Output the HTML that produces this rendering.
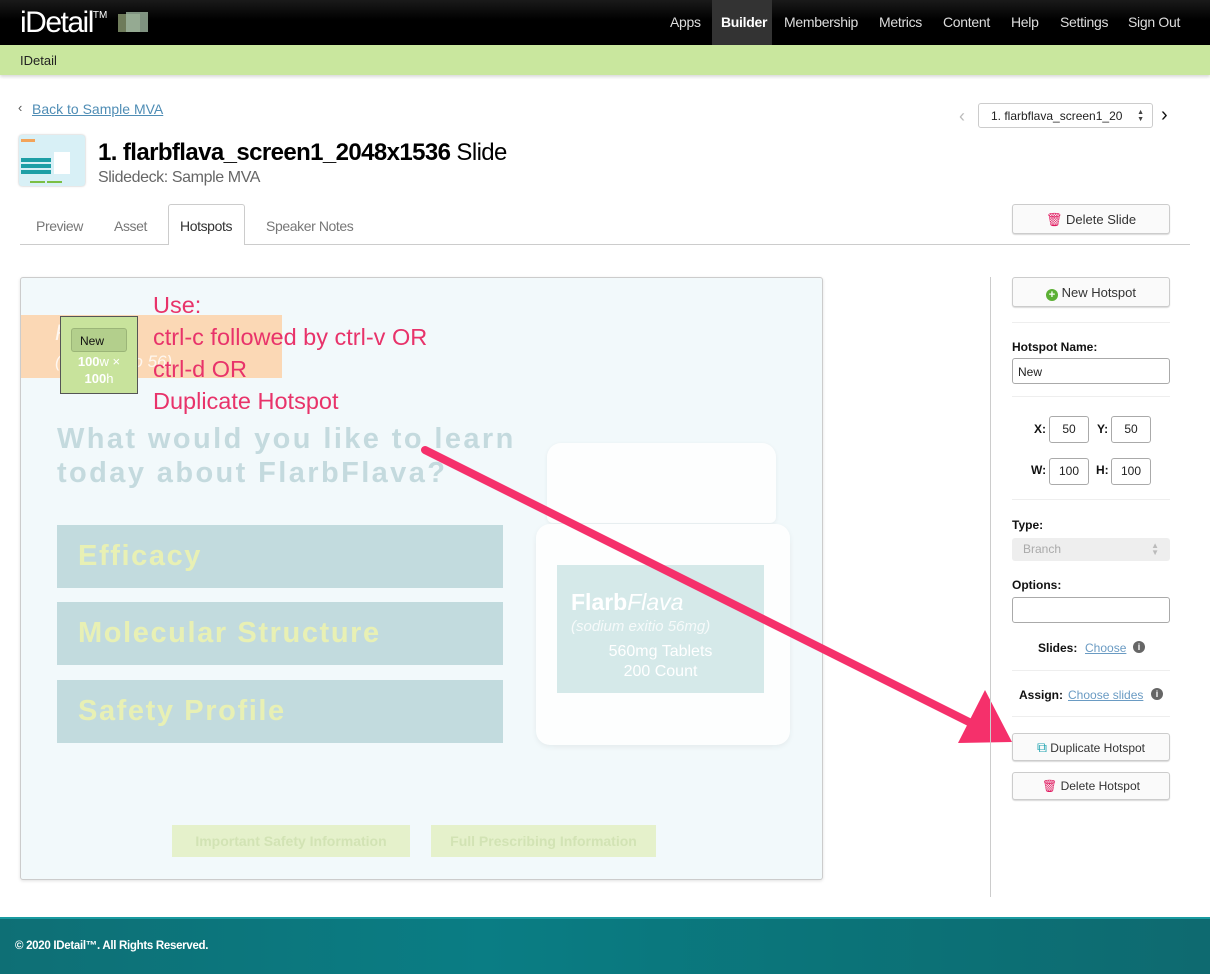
<!DOCTYPE html>
<html><head><meta charset="utf-8"><style>
*{box-sizing:border-box;margin:0;padding:0}
body{width:1210px;height:974px;position:relative;background:#fff;font-family:"Liberation Sans",sans-serif;overflow:hidden;color:#222}
.a{position:absolute}
.top{left:0;top:0;width:1210px;height:45px;background:linear-gradient(#1a1a1a,#000 45%)}
.nav{font-size:14px;color:#ddd;top:14px;letter-spacing:-0.3px}
.green{left:0;top:45px;width:1210px;height:30px;background:#c9e79e;box-shadow:0 2px 3px rgba(0,0,0,.15)}
.btn{background:#fafafa;border:1px solid #ccc;border-radius:3px;box-shadow:0 1px 1px rgba(0,0,0,.15);font-size:12px;color:#333;text-align:center}
.inp{border:1px solid #aaa;border-radius:3px;background:#fff;font-size:12px}
.lbl{font-size:12px;font-weight:bold;color:#111}
.hr{height:1px;background:#eee;left:1012px;width:158px}
.sb{background:#c2dbde;left:57px;width:446px;height:63px;color:#e8f0b4;font-weight:bold;font-size:29px;padding-left:21px;line-height:63px;letter-spacing:1.6px}
.pink{color:#e8336a;font-size:23.5px;left:153px}
</style></head><body>
<div class="a top"></div>
<div class="a" style="left:20px;top:6px;font-size:30px;color:#fff;letter-spacing:-1.5px">iDetail<sup style="font-size:10px;letter-spacing:0;vertical-align:top;position:relative;top:4px">TM</sup></div>
<div class="a" style="left:118px;top:14px;width:22px;height:18px;background:#8a9a70;opacity:.8"></div>
<div class="a" style="left:126px;top:12px;width:22px;height:20px;background:#9fb7a0;opacity:.8"></div>
<div class="a" style="left:712px;top:0;width:60px;height:45px;background:#333"></div>
<div class="a nav" style="left:670px">Apps</div>
<div class="a nav" style="left:721px;color:#fff;font-weight:bold">Builder</div>
<div class="a nav" style="left:784px">Membership</div>
<div class="a nav" style="left:879px">Metrics</div>
<div class="a nav" style="left:943px">Content</div>
<div class="a nav" style="left:1011px">Help</div>
<div class="a nav" style="left:1060px">Settings</div>
<div class="a nav" style="left:1128px">Sign Out</div>
<div class="a green"></div>
<div class="a" style="left:20px;top:53px;font-size:13px;color:#222">IDetail</div>
<div class="a" style="left:18px;top:100px;font-size:13px;color:#555">‹</div>
<div class="a" style="left:32px;top:101px;font-size:14px;color:#4f8db5;text-decoration:underline">Back to Sample MVA</div>
<div class="a" style="left:959px;top:106px;font-size:18px;color:#bbb">‹</div>
<div class="a inp" style="left:978px;top:103px;width:175px;height:25px;border-color:#ccc;padding:5px 12px;font-size:12px;color:#222">1. flarbflava_screen1_20 <span style="position:absolute;right:8px;top:5px;font-size:7px;line-height:7px;color:#444">▲<br>▼</span></div>
<div class="a" style="left:1161px;top:104px;font-size:20px;color:#111">›</div>
<div class="a" style="left:19px;top:135px;width:66px;height:51px;background:#d8f0f6;border-radius:3px;box-shadow:0 0 2px #bbb"></div>
<div class="a" style="left:21px;top:139px;width:14px;height:3px;background:#f3a45a"></div>
<div class="a" style="left:21px;top:158px;width:30px;height:4px;background:#1e9fa6"></div>
<div class="a" style="left:21px;top:164px;width:30px;height:4px;background:#1e9fa6"></div>
<div class="a" style="left:21px;top:170px;width:30px;height:4px;background:#1e9fa6"></div>
<div class="a" style="left:54px;top:152px;width:16px;height:22px;background:#fff"></div>
<div class="a" style="left:30px;top:181px;width:15px;height:2px;background:#7bbf44"></div>
<div class="a" style="left:47px;top:181px;width:15px;height:2px;background:#7bbf44"></div>
<div class="a" style="left:98px;top:139px;font-size:24px;color:#000;letter-spacing:-0.6px"><b>1. flarbflava_screen1_2048x1536</b> Slide</div>
<div class="a" style="left:98px;top:169px;font-size:16px;color:#666;letter-spacing:-0.4px">Slidedeck: Sample MVA</div>
<div class="a" style="left:20px;top:244px;width:1170px;height:1px;background:#ccc"></div>
<div class="a" style="left:168px;top:204px;width:77px;height:41px;border:1px solid #ccc;border-bottom:none;background:#fff;border-radius:3px 3px 0 0"></div>
<div class="a" style="left:36px;top:218px;font-size:14px;color:#777;letter-spacing:-0.4px">Preview</div>
<div class="a" style="left:114px;top:218px;font-size:14px;color:#777;letter-spacing:-0.4px">Asset</div>
<div class="a" style="left:180px;top:218px;font-size:14px;color:#333;letter-spacing:-0.4px">Hotspots</div>
<div class="a" style="left:266px;top:218px;font-size:14px;color:#777;letter-spacing:-0.4px">Speaker Notes</div>
<div class="a btn" style="left:1012px;top:204px;width:158px;height:30px;line-height:29px;font-size:13px"><span style="color:#e0185e">🗑</span> Delete Slide</div>

<!-- slide -->
<div class="a" style="left:20px;top:277px;width:803px;height:603px;background:#f2f9fb;border:1px solid #ccc;border-radius:3px;box-shadow:0 1px 3px rgba(0,0,0,.12);overflow:hidden">
</div>
<div class="a" style="left:21px;top:315px;width:261px;height:63px;background:#fbd8b5"></div>
<div class="a" style="left:55px;top:320px;font-size:22px;color:#fff;font-style:italic;opacity:.8">F&nbsp;&nbsp;&nbsp;&nbsp;&nbsp;&nbsp;Fla</div>
<div class="a" style="left:55px;top:352px;font-size:17px;color:#fff;font-style:italic;opacity:.8">(&nbsp;&nbsp;&nbsp;&nbsp;&nbsp;&nbsp;&nbsp;&nbsp;&nbsp;exitio 56)</div>
<div class="a" style="left:60px;top:316px;width:78px;height:78px;background:#c8e39c;border:1px solid #555"></div>
<div class="a" style="left:71px;top:328px;width:56px;height:24px;background:#b3cf8c;border:1px solid #9bb578;border-radius:3px;font-size:12px;padding:5px 8px;color:#111">New</div>
<div class="a" style="left:61px;top:353px;width:76px;text-align:center;color:#fff;font-size:13px;line-height:17px"><b>100</b>w ×<br><b>100</b>h</div>
<div class="a pink" style="top:292px">Use:</div>
<div class="a pink" style="top:324px">ctrl-c followed by ctrl-v OR</div>
<div class="a pink" style="top:356px">ctrl-d OR</div>
<div class="a pink" style="top:388px">Duplicate Hotspot</div>
<div class="a" style="left:57px;top:422px;font-size:29px;font-weight:bold;color:#c4dade;line-height:34px;letter-spacing:2.4px">What would you like to learn<br>today about FlarbFlava?</div>
<div class="a sb" style="top:525px">Efficacy</div>
<div class="a sb" style="top:602px">Molecular Structure</div>
<div class="a sb" style="top:680px">Safety Profile</div>
<div class="a" style="left:547px;top:443px;width:229px;height:80px;background:#fdfefe;border-radius:14px 14px 6px 6px;box-shadow:0 1px 4px rgba(0,0,0,.06)"></div>
<div class="a" style="left:536px;top:524px;width:254px;height:221px;background:#fdfefe;border-radius:14px;box-shadow:0 2px 6px rgba(0,0,0,.06)"></div>
<div class="a" style="left:557px;top:565px;width:207px;height:128px;background:#d5e9e9"></div>
<div class="a" style="left:571px;top:589px;font-size:23px;color:#fff"><b>Flarb</b><i style="font-weight:normal">Flava</i></div>
<div class="a" style="left:571px;top:618px;font-size:15px;color:#fff;font-style:italic;opacity:.8">(sodium exitio 56mg)</div>
<div class="a" style="left:557px;top:642px;width:207px;text-align:center;font-size:16px;color:#fff;line-height:20px">560mg Tablets<br>200 Count</div>
<div class="a" style="left:172px;top:825px;width:238px;height:32px;background:#e5f1cb;color:#d2e3b4;font-weight:bold;font-size:14px;text-align:center;line-height:32px">Important Safety Information</div>
<div class="a" style="left:431px;top:825px;width:225px;height:32px;background:#e5f1cb;color:#d2e3b4;font-weight:bold;font-size:14px;text-align:center;line-height:32px">Full Prescribing Information</div>

<!-- arrow -->
<svg class="a" style="left:0;top:0" width="1210" height="974"><line x1="425" y1="450" x2="975" y2="725" stroke="#f5306b" stroke-width="8" stroke-linecap="round"/><polygon points="1012,742 958,743 985,690" fill="#f5306b"/></svg>

<!-- right panel -->
<div class="a" style="left:990px;top:277px;width:1px;height:620px;background:#ccc"></div>
<div class="a btn" style="left:1012px;top:277px;width:158px;height:30px;line-height:29px;font-size:13px"><span style="display:inline-block;width:12px;height:12px;border-radius:50%;background:#5cb035;color:#fff;font-size:11px;line-height:12px;font-weight:bold;vertical-align:-1px">+</span> New Hotspot</div>
<div class="a hr" style="top:322px"></div>
<div class="a lbl" style="left:1012px;top:340px">Hotspot Name:</div>
<div class="a inp" style="left:1012px;top:358px;width:158px;height:26px;padding:6px 5px">New</div>
<div class="a hr" style="top:396px"></div>
<div class="a lbl" style="left:1034px;top:422px">X:</div>
<div class="a inp" style="left:1049px;top:416px;width:40px;height:27px;text-align:center;line-height:25px">50</div>
<div class="a lbl" style="left:1097px;top:422px">Y:</div>
<div class="a inp" style="left:1111px;top:416px;width:40px;height:27px;text-align:center;line-height:25px">50</div>
<div class="a lbl" style="left:1031px;top:463px">W:</div>
<div class="a inp" style="left:1049px;top:458px;width:40px;height:27px;text-align:center;line-height:25px">100</div>
<div class="a lbl" style="left:1096px;top:463px">H:</div>
<div class="a inp" style="left:1111px;top:458px;width:40px;height:27px;text-align:center;line-height:25px">100</div>
<div class="a hr" style="top:499px"></div>
<div class="a lbl" style="left:1012px;top:518px">Type:</div>
<div class="a" style="left:1012px;top:538px;width:158px;height:23px;background:#eee;border-radius:3px;font-size:12px;color:#aaa;padding:4px 11px">Branch<span style="float:right;font-size:8px;line-height:7px;color:#bbb">▲<br>▼</span></div>
<div class="a lbl" style="left:1012px;top:578px">Options:</div>
<div class="a inp" style="left:1012px;top:597px;width:158px;height:26px"></div>
<div class="a lbl" style="left:1038px;top:641px">Slides:</div>
<div class="a" style="left:1085px;top:641px;font-size:12px;color:#6a9bc3;text-decoration:underline">Choose</div>
<div class="a" style="left:1133px;top:641px;width:12px;height:12px;border-radius:50%;background:#666;color:#fff;font-size:9px;text-align:center;line-height:12px;font-weight:bold">i</div>
<div class="a hr" style="top:670px"></div>
<div class="a lbl" style="left:1019px;top:688px">Assign:</div>
<div class="a" style="left:1068px;top:688px;font-size:12px;color:#6a9bc3;text-decoration:underline">Choose slides</div>
<div class="a" style="left:1151px;top:688px;width:12px;height:12px;border-radius:50%;background:#666;color:#fff;font-size:9px;text-align:center;line-height:12px;font-weight:bold">i</div>
<div class="a hr" style="top:716px"></div>
<div class="a btn" style="left:1012px;top:733px;width:158px;height:28px;line-height:27px"><span style="color:#1fa3b0;font-size:14px">⧉</span> Duplicate Hotspot</div>
<div class="a btn" style="left:1012px;top:772px;width:158px;height:28px;line-height:27px"><span style="color:#e0185e">🗑</span> Delete Hotspot</div>

<div class="a" style="left:0;top:917px;width:1210px;height:57px;background:linear-gradient(90deg,#0e6f75,#0a7d84 40%,#0b7378 70%,#0e6a70);border-top:2px solid #1a9aa0"></div>
<div class="a" style="left:15px;top:940px;font-size:11.5px;font-weight:bold;color:#fff;letter-spacing:-0.3px">© 2020 IDetail™.  All Rights Reserved.</div>
</body></html>
